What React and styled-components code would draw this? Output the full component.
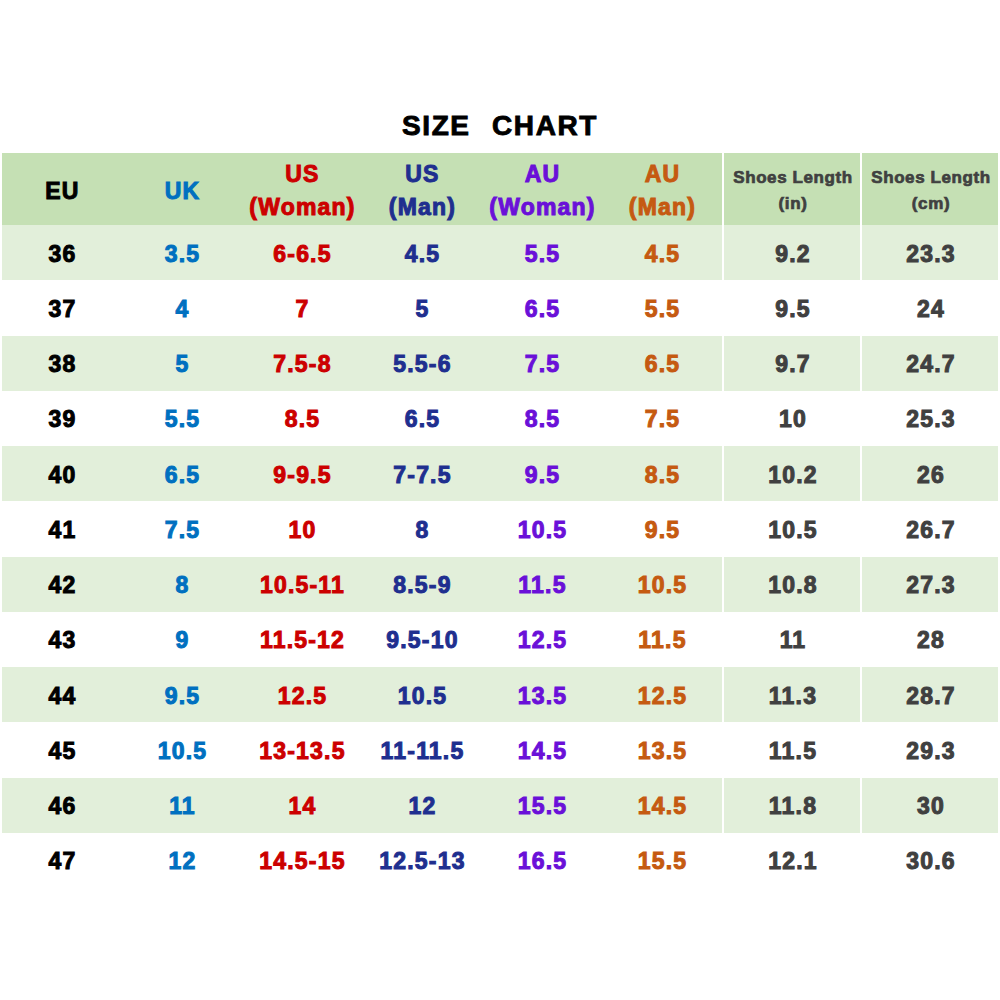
import React from "react";
import styled, { createGlobalStyle } from "styled-components";

const Global = createGlobalStyle`
  html, body { margin: 0; padding: 0; background: #fff; }
  body { font-family: "Liberation Sans", Arial, sans-serif; }
`;

const Page = styled.div`
  width: 1000px;
  height: 1000px;
  padding: 105px 0 0 2px;
  box-sizing: border-box;
`;

const Title = styled.h1`
  margin: 0 0 8px 0;
  height: 40px;
  line-height: 42px;
  text-align: center;
  font-size: 28px;
  font-weight: 700;
  color: #000;
  word-spacing: 12px;
  letter-spacing: 1.6px;
  -webkit-text-stroke: 0.9px #000;
  padding-right: 2px;
`;

const Table = styled.div`
  display: grid;
  grid-template-columns: repeat(6, 120px) 138px 138px;
  width: 996px;
`;

const Row = styled.div`
  display: contents;
`;

const Cell = styled.div`
  height: ${(p) => (p.$header ? "72px" : "55.25px")};
  background: ${(p) => (p.$header ? "#c5e0b4" : p.$alt ? "#e2efda" : "#ffffff")};
  display: flex;
  flex-direction: column;
  align-items: center;
  justify-content: center;
  text-align: center;
  white-space: nowrap;
  color: ${(p) => p.$color};
  font-weight: 700;
  font-size: ${(p) => (p.$small ? "17px" : "23px")};
  line-height: ${(p) => (p.$small ? "26px" : "33px")};
  -webkit-text-stroke: ${(p) => (p.$small ? "0.7px" : "1px")} ${(p) => p.$color};
  letter-spacing: ${(p) => (p.$small ? "0.6px" : "1.2px")};
  border-left: ${(p) => (p.$sep ? "2px solid #fff" : "none")};
  box-sizing: border-box;
  padding-top: ${(p) => (p.$header ? "4px" : "3px")};
  padding-left: ${(p) => (p.$sep ? "2px" : "1px")};
`;

const colors = ["#000000", "#0070c0", "#cc0000", "#1f2f8f", "#6a10d8", "#c55a11", "#404040", "#404040"];

const headers = [
  ["EU"],
  ["UK"],
  ["US", "(Woman)"],
  ["US", "(Man)"],
  ["AU", "(Woman)"],
  ["AU", "(Man)"],
  ["Shoes Length", "(in)"],
  ["Shoes Length", "(cm)"],
];

const data = [
  ["36", "3.5", "6-6.5", "4.5", "5.5", "4.5", "9.2", "23.3"],
  ["37", "4", "7", "5", "6.5", "5.5", "9.5", "24"],
  ["38", "5", "7.5-8", "5.5-6", "7.5", "6.5", "9.7", "24.7"],
  ["39", "5.5", "8.5", "6.5", "8.5", "7.5", "10", "25.3"],
  ["40", "6.5", "9-9.5", "7-7.5", "9.5", "8.5", "10.2", "26"],
  ["41", "7.5", "10", "8", "10.5", "9.5", "10.5", "26.7"],
  ["42", "8", "10.5-11", "8.5-9", "11.5", "10.5", "10.8", "27.3"],
  ["43", "9", "11.5-12", "9.5-10", "12.5", "11.5", "11", "28"],
  ["44", "9.5", "12.5", "10.5", "13.5", "12.5", "11.3", "28.7"],
  ["45", "10.5", "13-13.5", "11-11.5", "14.5", "13.5", "11.5", "29.3"],
  ["46", "11", "14", "12", "15.5", "14.5", "11.8", "30"],
  ["47", "12", "14.5-15", "12.5-13", "16.5", "15.5", "12.1", "30.6"],
];

export default function App() {
  return (
    <Page>
      <Global />
      <Title>SIZE CHART</Title>
      <Table>
        <Row>
          {headers.map((h, i) => (
            <Cell key={i} $header $color={colors[i]} $small={i >= 6} $sep={i >= 6}>
              {h.map((line, j) => (
                <span key={j}>{line}</span>
              ))}
            </Cell>
          ))}
        </Row>
        {data.map((r, ri) => (
          <Row key={ri}>
            {r.map((v, i) => (
              <Cell key={i} $alt={ri % 2 === 0} $color={colors[i]} $sep={i >= 6}>
                {v}
              </Cell>
            ))}
          </Row>
        ))}
      </Table>
    </Page>
  );
}
